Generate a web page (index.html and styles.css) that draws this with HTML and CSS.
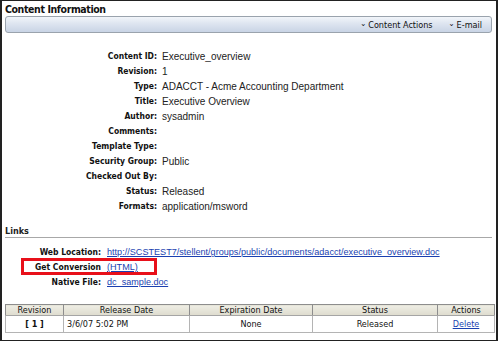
FILE: index.html
```html
<!DOCTYPE html>
<html>
<head>
<meta charset="utf-8">
<link rel="stylesheet" href="styles.css">
</head>
<body>
<div class="frame">
  <div class="title">Content Information</div>
  <div class="toolbar">
    <span class="menu"><span class="caret">&#8964;</span>Content Actions</span>
    <span class="menu"><span class="caret">&#8964;</span>E-mail</span>
  </div>
  <div class="info">
    <div class="lbl">Content ID:</div><div class="val">Executive_overview</div>
    <div class="lbl">Revision:</div><div class="val">1</div>
    <div class="lbl">Type:</div><div class="val">ADACCT - Acme Accounting Department</div>
    <div class="lbl">Title:</div><div class="val">Executive Overview</div>
    <div class="lbl">Author:</div><div class="val">sysadmin</div>
    <div class="lbl">Comments:</div><div class="val"></div>
    <div class="lbl">Template Type:</div><div class="val"></div>
    <div class="lbl">Security Group:</div><div class="val">Public</div>
    <div class="lbl">Checked Out By:</div><div class="val"></div>
    <div class="lbl">Status:</div><div class="val">Released</div>
    <div class="lbl">Formats:</div><div class="val">application/msword</div>
  </div>
  <div class="section">Links</div>
  <div class="links">
    <div class="lbl">Web Location:</div><div class="val"><a href="#">http://SCSTEST7/stellent/groups/public/documents/adacct/executive_overview.doc</a></div>
    <div class="lbl">Get Conversion</div><div class="val"><a href="#">(HTML)</a><span class="highlight"></span></div>
    <div class="lbl">Native File:</div><div class="val"><a href="#">dc_sample.doc</a></div>
  </div>
  <table class="revs">
    <thead>
      <tr><th class="c1">Revision</th><th class="c2">Release Date</th><th class="c3">Expiration Date</th><th class="c4">Status</th><th class="c5">Actions</th></tr>
    </thead>
    <tbody>
      <tr><td class="rev">[ 1 ]</td><td class="left">3/6/07 5:02 PM</td><td>None</td><td>Released</td><td><a href="#">Delete</a></td></tr>
    </tbody>
  </table>
</div>
</body>
</html>
```

FILE: styles.css
```css
html, body {
  margin: 0;
  padding: 0;
  background: #fff;
}
body {
  width: 498px;
  height: 341px;
  overflow: hidden;
}
.frame {
  box-sizing: border-box;
  width: 498px;
  height: 341px;
  border-top: 1px solid #222;
  border-left: 2px solid #222;
  border-right: 2px solid #222;
  border-bottom: 1px solid #222;
  padding: 2px 4px 0 3px;
  font-family: "Liberation Sans", Arial, sans-serif;
  font-size: 10px;
  color: #222;
}
.title {
  font-family: "DejaVu Sans", sans-serif;
  font-stretch: condensed;
  font-weight: bold;
  font-size: 10.5px;
  letter-spacing: -0.4px;
  line-height: 13px;
  color: #111;
}
.toolbar {
  margin-top: 0;
  height: 15px;
  border: 1px solid #9aa3ad;
  border-radius: 3px;
  background: linear-gradient(#f2f5fa 0%, #dfe6f1 40%, #c9d4e5 100%);
  display: flex;
  justify-content: flex-end;
  align-items: center;
  gap: 16px;
  padding-right: 9px;
  font-family: "DejaVu Sans", sans-serif;
  font-stretch: condensed;
  font-size: 9px;
  color: #111;
}
.caret {
  font-size: 8px;
  margin-right: 2px;
  position: relative;
  top: -2px;
}
.info {
  display: grid;
  grid-template-columns: 152px 1fr;
  column-gap: 5px;
  margin-top: 16px;
  grid-auto-rows: 15px;
}
.lbl {
  text-align: right;
  font-family: "DejaVu Sans", sans-serif;
  font-stretch: condensed;
  font-weight: bold;
  font-size: 8.5px;
  line-height: 15px;
  color: #111;
  white-space: nowrap;
}
.val {
  line-height: 15px;
  white-space: nowrap;
  position: relative;
}
.section {
  margin-top: 11px;
  font-family: "DejaVu Sans", sans-serif;
  font-stretch: condensed;
  font-weight: bold;
  font-size: 9px;
  line-height: 12px;
  padding-bottom: 0;
  border-bottom: 1px solid #a8a8a8;
}
.links {
  display: grid;
  grid-template-columns: 96px 1fr;
  column-gap: 6px;
  grid-auto-rows: 15px;
  margin-top: 7px;
}
.links .val {
  font-size: 9.1px;
}
a {
  color: #1a3fb0;
  text-decoration: underline;
}
.highlight {
  position: absolute;
  left: -86px;
  top: -2px;
  width: 130px;
  height: 11px;
  border: 3px solid #e8101a;
}
.revs {
  margin-top: 14px;
  width: 486px;
  border-collapse: collapse;
  font-family: "DejaVu Sans", sans-serif;
  font-stretch: condensed;
  font-size: 9px;
  color: #111;
  table-layout: fixed;
  border: 1px solid #7b7b7b;
}
.revs th {
  font-weight: normal;
  height: 10px;
  padding: 0;
  line-height: 10px;
  background: linear-gradient(#eeede4, #dedcce);
  border: 1px solid #8d8d8d;
  border-bottom-color: #a5a5a5;
}
.revs td {
  height: 16px;
  padding: 0 3px;
  text-align: center;
  border: 1px solid #b4b4b4;
}
.revs td.left { text-align: left; }
.revs td.rev { font-weight: bold; }
.c1 { width: 57px; }
.c2 { width: 125px; }
.c3 { width: 122px; }
.c4 { width: 124px; }
.c5 { width: 56px; }
```
